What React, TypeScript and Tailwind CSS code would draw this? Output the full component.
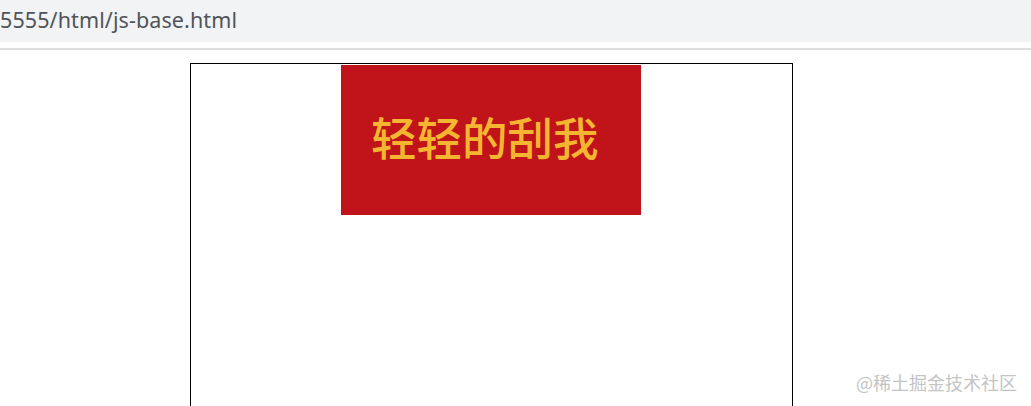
export default function App() {
  return (
    <div className="relative h-[406px] w-[1031px] overflow-hidden bg-white font-['Noto_Sans','Noto_Sans_CJK_SC',sans-serif]">
      {/* address bar */}
      <div className="flex h-[42px] items-center bg-[#f1f3f4] pb-[2px]">
        <span className="text-[21.5px] leading-none tracking-[0.1px] text-[#505357]">5555/html/js-base.html</span>
      </div>
      <div className="mt-[6px] h-[2px] bg-[#dcdee0]" />

      {/* page */}
      <div className="ml-[190px] mt-[13px] h-[400px] w-[603px] border border-black">
        <div className="ml-[150px] mt-[1px] flex h-[150px] w-[300px] items-center bg-[#c0131a] pl-[30px] pb-[6px]">
          <span className="font-['Noto_Sans_CJK_SC',sans-serif] text-[45.5px] font-medium leading-none text-[#f4b630]">轻轻的刮我</span>
        </div>
      </div>

      <div className="absolute bottom-[15px] right-[14px] font-['Noto_Sans_CJK_SC',sans-serif] text-[18px] leading-none text-[#c4c4c4]">
        @稀土掘金技术社区
      </div>
    </div>
  )
}
